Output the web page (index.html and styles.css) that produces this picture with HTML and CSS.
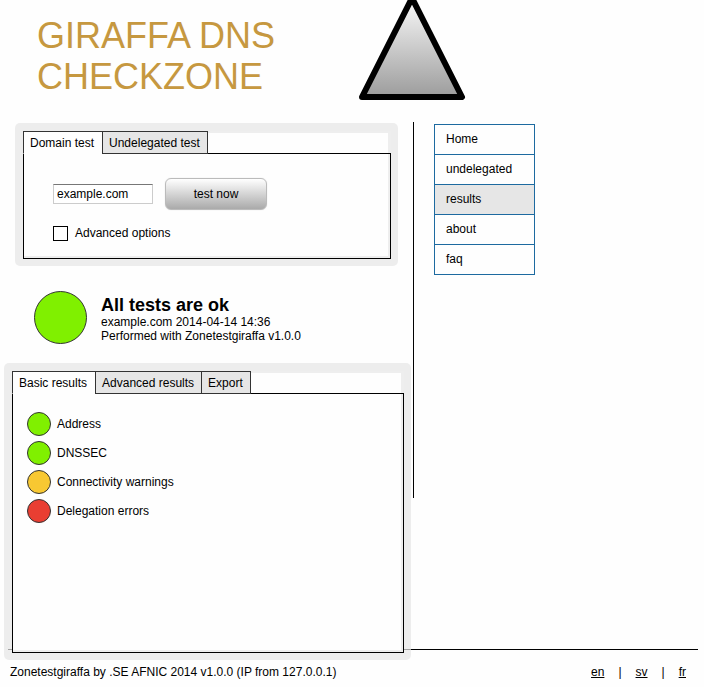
FILE: index.html
```
<!DOCTYPE html>
<html lang="en">
<head>
<meta charset="utf-8">
<title>Giraffa DNS Checkzone</title>
<link rel="stylesheet" href="styles.css">
</head>
<body>
<header class="header">
  <h1 class="title">GIRAFFA DNS<br>CHECKZONE</h1>
  <svg class="logo" width="110" height="101" viewBox="0 0 110 101" aria-hidden="true">
    <defs>
      <linearGradient id="fade" x1="0" y1="0" x2="0" y2="1">
        <stop offset="0" stop-color="#fafafa"/>
        <stop offset="1" stop-color="#9c9c9c"/>
      </linearGradient>
    </defs>
    <path d="M55 -2 L105 97 H5 Z" fill="url(#fade)" stroke="#000" stroke-width="6" stroke-linejoin="round"/>
  </svg>
</header>
<div class="layout">
  <main>
    <section class="frame frame-test">
      <div class="tabs">
        <button class="tab tab-active" type="button">Domain test</button>
        <button class="tab" type="button">Undelegated test</button>
      </div>
      <form class="pane test-form">
        <div class="row">
          <input class="domain" type="text" value="example.com" aria-label="Domain">
          <button class="run" type="button">test now</button>
        </div>
        <label class="option"><input class="check" type="checkbox">Advanced options</label>
      </form>
    </section>
    <section class="summary">
      <span class="light light-big ok"></span>
      <div class="summary-text">
        <h2 class="verdict">All tests are ok</h2>
        <p>example.com 2014-04-14 14:36</p>
        <p>Performed with Zonetestgiraffa v1.0.0</p>
      </div>
    </section>
    <section class="frame frame-results">
      <div class="tabs">
        <button class="tab tab-active" type="button">Basic results</button>
        <button class="tab" type="button">Advanced results</button>
        <button class="tab" type="button">Export</button>
      </div>
      <ul class="pane results">
        <li><span class="light ok"></span>Address</li>
        <li><span class="light ok"></span>DNSSEC</li>
        <li><span class="light warning"></span>Connectivity warnings</li>
        <li><span class="light error"></span>Delegation errors</li>
      </ul>
    </section>
  </main>
  <aside class="side">
    <nav class="menu">
      <a href="#">Home</a>
      <a href="#">undelegated</a>
      <a class="current" href="#">results</a>
      <a href="#">about</a>
      <a href="#">faq</a>
    </nav>
  </aside>
</div>
<footer class="footer">
  <span>Zonetestgiraffa by .SE AFNIC 2014 v1.0.0 (IP from 127.0.0.1)</span>
  <nav class="languages">
    <a href="#">en</a><span>|</span><a href="#">sv</a><span>|</span><a href="#">fr</a>
  </nav>
</footer>
</body>
</html>
```
FILE: styles.css
```
* {
  box-sizing: border-box;
}

body {
  margin: 0;
  background: #fefefe;
  color: #000;
  font: 12px/14px "Liberation Sans", Arial, sans-serif;
}

h1, h2, p, ul {
  margin: 0;
  padding: 0;
}

button, input {
  margin: 0;
  color: inherit;
  font: inherit;
}

a {
  color: inherit;
}

.header {
  display: grid;
  grid-template-columns: 320fr 347fr;
  height: 122px;
  padding-left: 37px;
}

.title {
  padding-top: 15px;
  color: #c69840;
  font-size: 36px;
  font-weight: normal;
  line-height: 41px;
}

.logo {
  display: block;
}

.layout {
  display: grid;
  grid-template-columns: 413fr 291fr;
}

/* Translucent frame, so the footer rule shows through it */
.frame {
  position: relative;
  z-index: 1;
  padding: 8px 7px 7px 8px;
  border-radius: 5px;
  background: rgba(230, 230, 230, 0.7);
}

.frame-test {
  margin: 1px 15px 0;
}

.frame-results {
  margin: 0 2px 0 4px;
}

.tabs {
  display: flex;
  height: 22px;
  background: #fefefe;
  box-shadow: inset -3px 2px #eee;
}

.tab {
  height: 23px;
  padding: 0 7px 0 6px;
  border: 1px solid #333;
  background: #e6e6e6;
  white-space: nowrap;
  position: relative;
}

.tab + .tab {
  margin-left: -1px;
}

.tab-active {
  padding-right: 8px;
  border-bottom-color: #fefefe;
  background: #fefefe;
}

.pane {
  border: 1px solid #000;
  background: #fefefe;
  box-shadow: inset -2px -2px #eee;
}

.test-form {
  padding: 24px 29px 17px;
}

.row {
  display: flex;
  align-items: center;
  gap: 12px;
}

/* Short text area: descenders are cut off at its lower edge */
.domain {
  width: 100px;
  height: 20px;
  padding: 4px 3px;
  border: 1px solid #ccc;
  border-top-color: #777;
  background: #fff;
  line-height: 12px;
}

.run {
  width: 102px;
  height: 32px;
  border: 1px solid #bbb;
  border-radius: 6px;
  background: linear-gradient(#fff, #aaa);
  box-shadow: 0 0 1px #ccc;
}

.option {
  display: flex;
  align-items: flex-start;
  gap: 7px;
  width: max-content;
  margin-top: 16px;
}

.check {
  width: 15px;
  height: 15px;
  appearance: none;
  border: 1px solid #000;
  background: #fff;
}

.summary {
  display: flex;
  align-items: center;
  gap: 14px;
  padding: 25px 0 19px 34px;
}

.summary-text {
  padding-top: 2px;
}

.verdict {
  font-size: 18px;
  line-height: 20px;
}

.light {
  flex: none;
  width: 24px;
  height: 24px;
  border: 1px solid #333;
  border-radius: 50%;
}

.light-big {
  width: 53px;
  height: 53px;
}

.ok {
  background: #80f000;
}

.warning {
  background: #f8c832;
}

.error {
  background: #e93e32;
}

.results {
  display: flex;
  flex-direction: column;
  gap: 5px;
  min-height: 260px;
  padding: 18px 14px;
  list-style: none;
}

.results li {
  display: flex;
  align-items: center;
  gap: 6px;
}

.side {
  align-self: start;
  min-height: 376px;
  padding: 2px 0 0 20px;
  border-left: 1px solid #000;
}

.menu {
  width: 101px;
  border: 1px solid #1d6aa0;
}

.menu a {
  display: block;
  padding: 7px 11px 8px;
  text-decoration: none;
}

.menu a + a {
  border-top: 1px solid #1d6aa0;
}

.menu .current {
  background: #e6e6e6;
}

.footer {
  display: flex;
  justify-content: space-between;
  margin: -11px 6px 0 8px;
  padding: 15px 12px 8px 2px;
  border-top: 1px solid #000;
}

.languages {
  display: flex;
  gap: 14px;
}
```
